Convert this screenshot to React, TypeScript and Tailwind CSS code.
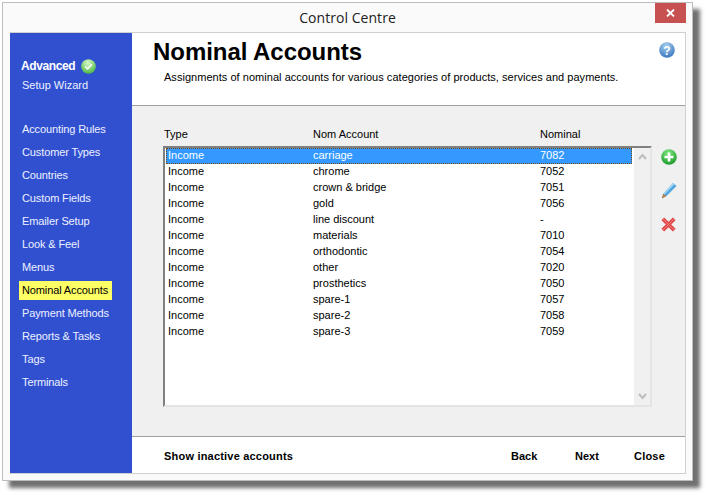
import React from "react";

const nav = ["Accounting Rules","Customer Types","Countries","Custom Fields","Emailer Setup","Look & Feel","Menus","Nominal Accounts","Payment Methods","Reports & Tasks","Tags","Terminals"];
const rows = [["carriage","7082"],["chrome","7052"],["crown & bridge","7051"],["gold","7056"],["line discount","-"],["materials","7010"],["orthodontic","7054"],["other","7020"],["prosthetics","7050"],["spare-1","7057"],["spare-2","7058"],["spare-3","7059"]];

function Orb({ size, from, to, children }: { size: number; from: string; to: string; children?: React.ReactNode }) {
  const id = "g" + from.slice(1);
  return (
    <svg width={size} height={size} viewBox="0 0 16 16" className="block">
      <defs>
        <radialGradient id={id} cx="45%" cy="25%" r="85%">
          <stop offset="0" stopColor={from} />
          <stop offset="1" stopColor={to} />
        </radialGradient>
      </defs>
      <circle cx="8" cy="8" r="7.8" fill={`url(#${id})`} />
      {children}
    </svg>
  );
}

export default function App() {
  return (
    <div className="w-[707px] h-[495px] bg-white pl-[2px] pt-[2px] font-['Liberation_Sans',sans-serif] text-[11px] text-black overflow-hidden">
      <div className="w-[691px] h-[479px] bg-[#fafafa] border border-[#bdbdbd] shadow-[7px_7px_4px_#707070] flex flex-col">
        <div className="h-[29px] shrink-0 relative flex items-center justify-center font-['Open_Sans',sans-serif] text-[14px] text-[#222] tracking-[0.05px]">
          Control Centre
          <div className="absolute right-[6px] top-0 w-[31px] h-[20px] bg-[#c75050] flex items-center justify-center">
            <svg width="9" height="8" viewBox="0 0 9 8"><path d="M1 0.5 L8 7.5 M8 0.5 L1 7.5" stroke="#fff" strokeWidth="1.8" /></svg>
          </div>
        </div>
        <div className="ml-[7px] w-[676px] h-[442px] flex border-r border-b border-[#d0d0d0] border-t border-t-[#d0d0d0] bg-white">
          <aside className="w-[122px] shrink-0 bg-[#3050d0] text-[#eef0ff] pl-[12px] pt-[25px]">
            <div className="flex items-center gap-[6px] h-[16px] font-bold text-[12px] -ml-[1px] tracking-[-0.4px] text-white">
              Advanced
              <Orb size={15} from="#d8f8c8" to="#38b030">
                <path d="M4.5 8 L7 10.5 L11.5 5.5" stroke="#fff" strokeWidth="1.6" fill="none" />
              </Orb>
            </div>
            <div className="mt-[4px] h-[14px] leading-[14px]">Setup Wizard</div>
            <ul className="mt-[26px] flex flex-col -ml-[3px] tracking-[-0.12px]">
              {nav.map((n) => (
                <li key={n} className="h-[23px] flex items-center">
                  <span className={n === "Nominal Accounts" ? "bg-[#ffff66] text-black h-[19px] w-[93px] pl-[3px] leading-[19px]" : "pl-[3px]"}>{n}</span>
                </li>
              ))}
            </ul>
          </aside>
          <main className="flex-1 flex flex-col min-w-0">
            <header className="h-[73px] shrink-0 bg-white border-b border-[#a0a0a0] pl-[21px] relative">
              <h1 className="text-[24px] font-bold leading-[28px] pt-[5px] h-[33px] tracking-[-0.05px]">Nominal Accounts</h1>
              <p className="mt-[4px] ml-[11px] leading-[14px] tracking-[0.035px]">Assignments of nominal accounts for various categories of products, services and payments.</p>
              <div className="absolute right-[10px] top-[9px]">
                <Orb size={16} from="#a8d0f0" to="#2a6cb8">
                  <text x="8" y="12.5" textAnchor="middle" fontSize="12" fontWeight="bold" fill="#fff" fontFamily="Liberation Sans">?</text>
                </Orb>
              </div>
            </header>
            <section className="flex-1 bg-[#f0f0f0] border-b border-[#a0a0a0] pl-[31px] pt-[21px] min-h-0">
              <div className="flex h-[14px] leading-[14px]">
                <span className="w-[150px] pl-px">Type</span>
                <span className="w-[227px] ml-[-1px] pl-[1px]">Nom Account</span>
                <span className="pl-px">Nominal</span>
              </div>
              <div className="flex mt-[5px]">
                <div className="w-[489px] h-[261px] bg-white border-t-2 border-l-2 border-t-[#808080] border-l-[#808080] border-b-2 border-r-2 border-b-[#e4e4e4] border-r-[#e4e4e4] flex">
                  <ul className="w-[469px] pl-[1px] pr-[2px]">
                    {rows.map(([name, code], i) => (
                      <li key={name} className={"h-[16px] flex items-center leading-[14px] pl-[2px] pb-[2px] " + (i === 0 ? "bg-[#3399ff] text-white outline-1 -outline-offset-1 outline-dotted outline-[#7a4a10]" : "")}>
                        <span className="w-[145px]">Income</span>
                        <span className="w-[227px]">{name}</span>
                        <span>{code}</span>
                      </li>
                    ))}
                  </ul>
                  <div className="flex-1 bg-[#f0f0f0] flex flex-col justify-between items-center py-[5px]">
                    <svg width="9" height="7" viewBox="0 0 9 7"><path d="M1 6 L4.5 2 L8 6" stroke="#bdbdbd" strokeWidth="2" fill="none" /></svg>
                    <svg width="9" height="7" viewBox="0 0 9 7"><path d="M1 1 L4.5 5 L8 1" stroke="#bdbdbd" strokeWidth="2" fill="none" /></svg>
                  </div>
                </div>
                <div className="ml-[8px] flex flex-col items-center w-[17px] pt-[3px]">
                  <Orb size={16} from="#80e880" to="#109020">
                    <path d="M8 3.5 V12.5 M3.5 8 H12.5" stroke="#fff" strokeWidth="2.6" />
                  </Orb>
                  <svg width="16" height="17" viewBox="0 0 16 17" className="mt-[17px]">
                    <path d="M12 1 L15.5 4 L5.5 14 L1 16.5 L2 12 Z" fill="#4fa4e0" />
                    <path d="M12 1 L13.5 2.2 L3.5 12.5 L2 12 Z" fill="#a4d8f6" />
                    <path d="M2 12 L5.5 14 L1 16.5 Z" fill="#c08040" />
                  </svg>
                  <svg width="15" height="15" viewBox="0 0 15 15" className="mt-[18px]">
                    <path d="M1.8 1.8 L13.2 13.2 M13.2 1.8 L1.8 13.2" stroke="#e04848" strokeWidth="3.8" strokeLinecap="butt" />
                    <path d="M1.8 1.8 L13.2 13.2 M13.2 1.8 L1.8 13.2" stroke="#f08080" strokeWidth="1" />
                  </svg>
                </div>
              </div>
            </section>
            <footer className="h-[36px] shrink-0 bg-white flex items-center pl-[32px] pt-[2px] font-bold">
              <span className="w-[347px] tracking-[0.2px]">Show inactive accounts</span>
              <span className="w-[64px]">Back</span>
              <span className="w-[59px]">Next</span>
              <span className="tracking-[0.2px]">Close</span>
            </footer>
          </main>
        </div>
      </div>
    </div>
  );
}
